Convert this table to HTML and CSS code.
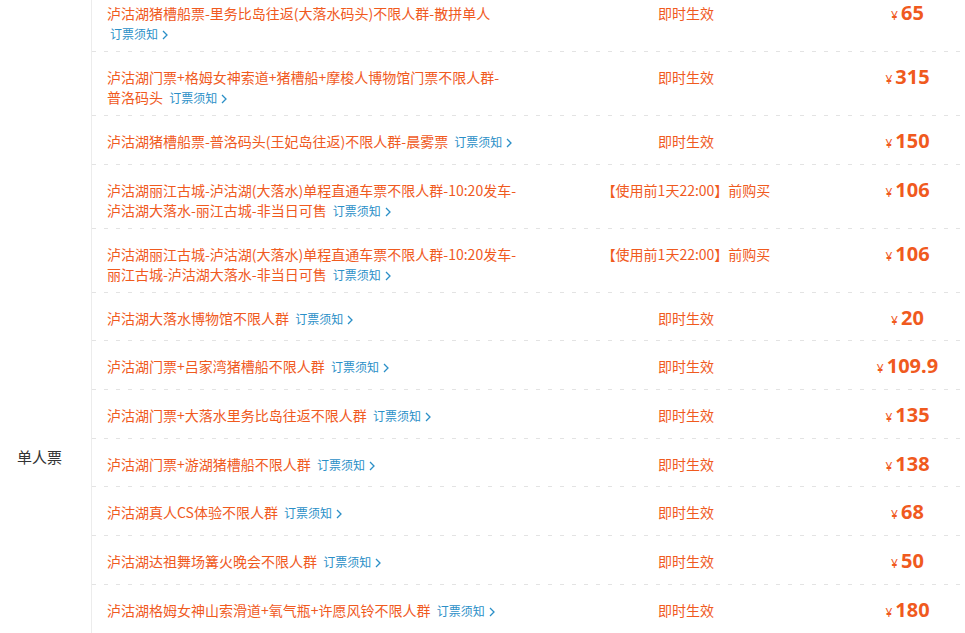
FILE: index.html
```html
<!DOCTYPE html>
<html lang="zh-CN">
<head>
<meta charset="utf-8">
<title>门票</title>
<link rel="stylesheet" href="styles.css">
</head>
<body>
<div class="group">
  <div class="group-label">单人票</div>
  <div class="rows">
    <div class="row">
      <div class="title">泸沽湖猪槽船票-里务比岛往返(大落水码头)不限人群-散拼单人<br><a class="notice" href="#">订票须知<svg class="chev" viewBox="0 0 6 10" width="6" height="10"><path d="M1 1l4 4-4 4" fill="none" stroke="currentColor" stroke-width="1.3"/></svg></a></div>
      <div class="mid">即时生效</div>
      <div class="price"><span class="yen">¥</span>65</div>
    </div>
    <div class="row">
      <div class="title">泸沽湖门票+格姆女神索道+猪槽船+摩梭人博物馆门票不限人群-<br>普洛码头 <a class="notice" href="#">订票须知<svg class="chev" viewBox="0 0 6 10" width="6" height="10"><path d="M1 1l4 4-4 4" fill="none" stroke="currentColor" stroke-width="1.3"/></svg></a></div>
      <div class="mid">即时生效</div>
      <div class="price"><span class="yen">¥</span>315</div>
    </div>
    <div class="row">
      <div class="title">泸沽湖猪槽船票-普洛码头(王妃岛往返)不限人群-晨雾票 <a class="notice" href="#">订票须知<svg class="chev" viewBox="0 0 6 10" width="6" height="10"><path d="M1 1l4 4-4 4" fill="none" stroke="currentColor" stroke-width="1.3"/></svg></a></div>
      <div class="mid">即时生效</div>
      <div class="price"><span class="yen">¥</span>150</div>
    </div>
    <div class="row">
      <div class="title">泸沽湖丽江古城-泸沽湖(大落水)单程直通车票不限人群-10:20发车-<br>泸沽湖大落水-丽江古城-非当日可售 <a class="notice" href="#">订票须知<svg class="chev" viewBox="0 0 6 10" width="6" height="10"><path d="M1 1l4 4-4 4" fill="none" stroke="currentColor" stroke-width="1.3"/></svg></a></div>
      <div class="mid">【使用前1天22:00】前购买</div>
      <div class="price"><span class="yen">¥</span>106</div>
    </div>
    <div class="row">
      <div class="title">泸沽湖丽江古城-泸沽湖(大落水)单程直通车票不限人群-10:20发车-<br>丽江古城-泸沽湖大落水-非当日可售 <a class="notice" href="#">订票须知<svg class="chev" viewBox="0 0 6 10" width="6" height="10"><path d="M1 1l4 4-4 4" fill="none" stroke="currentColor" stroke-width="1.3"/></svg></a></div>
      <div class="mid">【使用前1天22:00】前购买</div>
      <div class="price"><span class="yen">¥</span>106</div>
    </div>
    <div class="row">
      <div class="title">泸沽湖大落水博物馆不限人群 <a class="notice" href="#">订票须知<svg class="chev" viewBox="0 0 6 10" width="6" height="10"><path d="M1 1l4 4-4 4" fill="none" stroke="currentColor" stroke-width="1.3"/></svg></a></div>
      <div class="mid">即时生效</div>
      <div class="price"><span class="yen">¥</span>20</div>
    </div>
    <div class="row">
      <div class="title">泸沽湖门票+吕家湾猪槽船不限人群 <a class="notice" href="#">订票须知<svg class="chev" viewBox="0 0 6 10" width="6" height="10"><path d="M1 1l4 4-4 4" fill="none" stroke="currentColor" stroke-width="1.3"/></svg></a></div>
      <div class="mid">即时生效</div>
      <div class="price"><span class="yen">¥</span>109.9</div>
    </div>
    <div class="row">
      <div class="title">泸沽湖门票+大落水里务比岛往返不限人群 <a class="notice" href="#">订票须知<svg class="chev" viewBox="0 0 6 10" width="6" height="10"><path d="M1 1l4 4-4 4" fill="none" stroke="currentColor" stroke-width="1.3"/></svg></a></div>
      <div class="mid">即时生效</div>
      <div class="price"><span class="yen">¥</span>135</div>
    </div>
    <div class="row">
      <div class="title">泸沽湖门票+游湖猪槽船不限人群 <a class="notice" href="#">订票须知<svg class="chev" viewBox="0 0 6 10" width="6" height="10"><path d="M1 1l4 4-4 4" fill="none" stroke="currentColor" stroke-width="1.3"/></svg></a></div>
      <div class="mid">即时生效</div>
      <div class="price"><span class="yen">¥</span>138</div>
    </div>
    <div class="row">
      <div class="title">泸沽湖真人CS体验不限人群 <a class="notice" href="#">订票须知<svg class="chev" viewBox="0 0 6 10" width="6" height="10"><path d="M1 1l4 4-4 4" fill="none" stroke="currentColor" stroke-width="1.3"/></svg></a></div>
      <div class="mid">即时生效</div>
      <div class="price"><span class="yen">¥</span>68</div>
    </div>
    <div class="row">
      <div class="title">泸沽湖达祖舞场篝火晚会不限人群 <a class="notice" href="#">订票须知<svg class="chev" viewBox="0 0 6 10" width="6" height="10"><path d="M1 1l4 4-4 4" fill="none" stroke="currentColor" stroke-width="1.3"/></svg></a></div>
      <div class="mid">即时生效</div>
      <div class="price"><span class="yen">¥</span>50</div>
    </div>
    <div class="row">
      <div class="title">泸沽湖格姆女神山索滑道+氧气瓶+许愿风铃不限人群 <a class="notice" href="#">订票须知<svg class="chev" viewBox="0 0 6 10" width="6" height="10"><path d="M1 1l4 4-4 4" fill="none" stroke="currentColor" stroke-width="1.3"/></svg></a></div>
      <div class="mid">即时生效</div>
      <div class="price"><span class="yen">¥</span>180</div>
    </div>
    <div class="row">
      <div class="title">泸沽湖门票+里格半岛观景台不限人群 <a class="notice" href="#">订票须知<svg class="chev" viewBox="0 0 6 10" width="6" height="10"><path d="M1 1l4 4-4 4" fill="none" stroke="currentColor" stroke-width="1.3"/></svg></a></div>
      <div class="mid">即时生效</div>
      <div class="price"><span class="yen">¥</span>110</div>
    </div>
    <div class="row">
      <div class="title">泸沽湖摩梭家访不限人群 <a class="notice" href="#">订票须知<svg class="chev" viewBox="0 0 6 10" width="6" height="10"><path d="M1 1l4 4-4 4" fill="none" stroke="currentColor" stroke-width="1.3"/></svg></a></div>
      <div class="mid">即时生效</div>
      <div class="price"><span class="yen">¥</span>40</div>
    </div>
    <div class="row">
      <div class="title">泸沽湖草海走婚桥不限人群 <a class="notice" href="#">订票须知<svg class="chev" viewBox="0 0 6 10" width="6" height="10"><path d="M1 1l4 4-4 4" fill="none" stroke="currentColor" stroke-width="1.3"/></svg></a></div>
      <div class="mid">即时生效</div>
      <div class="price"><span class="yen">¥</span>30</div>
    </div>
    <div class="row">
      <div class="title">泸沽湖环湖骑行不限人群 <a class="notice" href="#">订票须知<svg class="chev" viewBox="0 0 6 10" width="6" height="10"><path d="M1 1l4 4-4 4" fill="none" stroke="currentColor" stroke-width="1.3"/></svg></a></div>
      <div class="mid">即时生效</div>
      <div class="price"><span class="yen">¥</span>60</div>
    </div>
    <div class="row">
      <div class="title">泸沽湖王妃岛门票不限人群 <a class="notice" href="#">订票须知<svg class="chev" viewBox="0 0 6 10" width="6" height="10"><path d="M1 1l4 4-4 4" fill="none" stroke="currentColor" stroke-width="1.3"/></svg></a></div>
      <div class="mid">即时生效</div>
      <div class="price"><span class="yen">¥</span>25</div>
    </div>
    <div class="row">
      <div class="title">泸沽湖篝火晚会+猪槽船不限人群 <a class="notice" href="#">订票须知<svg class="chev" viewBox="0 0 6 10" width="6" height="10"><path d="M1 1l4 4-4 4" fill="none" stroke="currentColor" stroke-width="1.3"/></svg></a></div>
      <div class="mid">即时生效</div>
      <div class="price"><span class="yen">¥</span>95</div>
    </div>
  </div>
</div>
</body>
</html>
```

FILE: styles.css
```css
html, body {
  margin: 0;
  padding: 0;
  background: #fff;
}

body {
  font-family: "Noto Sans CJK SC", "Microsoft YaHei", sans-serif;
  font-size: 14px;
  color: #333;
  overflow: hidden;
}

.group {
  display: flex;
  width: 965px;
  margin-top: -12px;
}

.group-label {
  box-sizing: border-box;
  width: 92px;
  flex: none;
  border-right: 1px solid #ececec;
  display: flex;
  align-items: center;
  padding-left: 17px;
  font-size: 15px;
  color: #333;
}

.rows {
  flex: 1;
  min-width: 0;
}

.row {
  box-sizing: border-box;
  display: grid;
  grid-template-columns: 434px 320px 1fr;
  align-items: start;
  min-height: 48.7px;
  padding: 15px 0 9px;
  background-image: repeating-linear-gradient(to right, #e3e3e3 0 4px, transparent 4px 12px);
  background-size: 100% 1px;
  background-position: left bottom;
  background-repeat: no-repeat;
}

.title {
  padding-left: 15px;
  line-height: 20px;
  font-size: 14px;
  color: #f05a1e;
}

.notice {
  margin-left: 3px;
  font-size: 12px;
  line-height: 12px;
  color: #2b8fc7;
  text-decoration: none;
  white-space: nowrap;
}

.chev {
  margin-left: 4px;
  vertical-align: -1px;
}

.mid {
  text-align: center;
  line-height: 20px;
  height: 20px;
  font-size: 14px;
  color: #f05a1e;
}

.price {
  text-align: center;
  font-family: "Noto Sans", "Noto Sans CJK SC", sans-serif;
  font-weight: 700;
  font-size: 20px;
  line-height: 20px;
  height: 20px;
  color: #f05a1e;
  padding-left: 4px;
}

.yen {
  font-size: 12px;
  line-height: 12px;
  font-weight: 400;
  margin-right: 3px;
}
```
